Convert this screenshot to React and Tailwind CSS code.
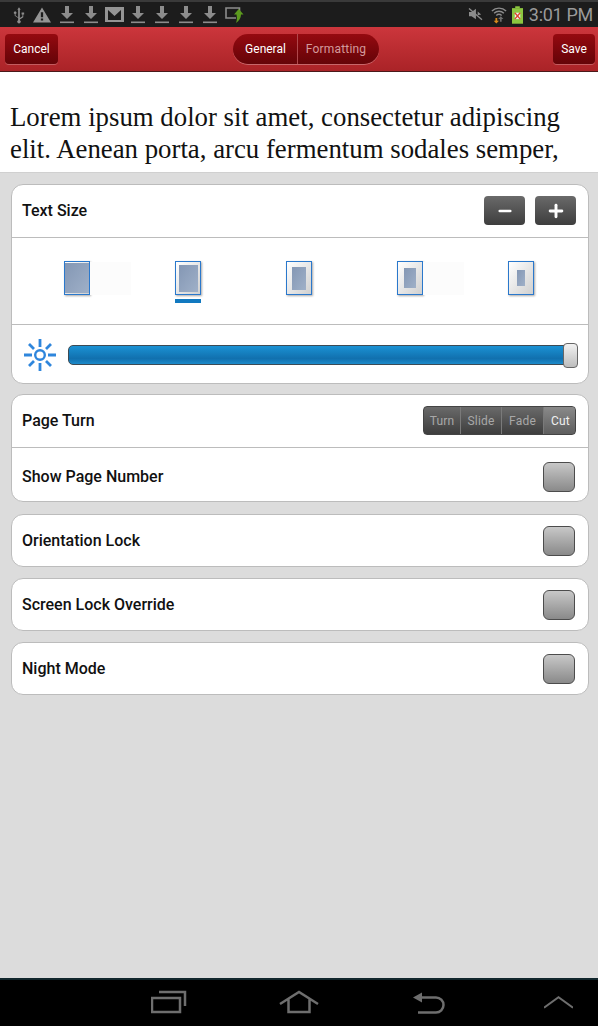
import { Plus, Minus } from "lucide-react";

const font = { fontFamily: "Roboto, sans-serif" };

function Down({ className = "" }) {
    return (
        <svg width="14" height="18" viewBox="0 0 14 18" className={`text-[#8c8c8c] ${className}`}>
            <path d="M5 0h4v7h4l-6 6-6-6h4z" fill="currentColor" />
            <rect x="0" y="15.500" width="14" height="1.600" fill="currentColor" />
        </svg>
    );
}

function StatusBar() {
    return (
        <div className="h-[27px] bg-[#1c1c1c] border-t-2 border-[#3a3a3a] flex items-center justify-between pl-[13px] pr-[5px]">
            <div className="flex items-center">
                <svg width="12" height="18" viewBox="0 0 14 18" className="text-[#8c8c8c]">
                    <path d="M7 0l2 3H8v9.500l3-2V8.500H10V6h3v2.500h-1v3l-4 2.700V15a2 2 0 1 1-2 0v-2.500L2 10V7.800a1.500 1.500 0 1 1 1 0v1.700l3 2V3H5z" fill="currentColor" />
                </svg>
                <svg width="18" height="16" viewBox="0 0 19 16" className="ml-[8px] text-[#949494]">
                    <path d="M9.500 0L19 16H0zM8.300 5v5.500h2.400V5zm0 6.700v2h2.400v-2z" fill="currentColor" fillRule="evenodd" />
                </svg>
                <Down className="ml-[9px]" />
                <Down className="ml-[10px]" />
                <svg width="19" height="15" viewBox="0 0 19 15" className="ml-[7px] text-[#949494]">
                    <path d="M0 0h19v15H0zM3 3v10h13V3L9.500 9z" fill="currentColor" fillRule="evenodd" />
                </svg>
                <Down className="ml-[7px]" />
                <Down className="ml-[10px]" />
                <Down className="ml-[10px]" />
                <Down className="ml-[10px]" />
                <svg width="19" height="17" viewBox="0 0 19 17" className="ml-[8px] mt-[2px]">
                    <path d="M14.500 5V1H1v10h10" fill="none" stroke="#8c8c8c" strokeWidth="1.600" />
                    <path d="M13.700 2l4.800 5.500H16C16 11 14 14 11 16c1.200-3 1-6 .5-8.500H9z" fill="#5c9a1e" />
                </svg>
            </div>
            <div className="flex items-center">
                <svg width="15" height="13" viewBox="0 0 17 15" className="text-[#8c8c8c]">
                    <path d="M1 4.500h3L9 1v12L4 9.500H1z" fill="currentColor" />
                    <path d="M1 0.500L16 13.500" stroke="currentColor" strokeWidth="1.500" />
                    <path d="M11 4l4 3.500-4 1z" fill="currentColor" />
                </svg>
                <svg width="16" height="18" viewBox="0 0 18 19" className="ml-[8px]">
                    <path d="M1 5a11.500 11.500 0 0 1 16 0M3.500 7.500a8 8 0 0 1 11 0M6 10a4.500 4.500 0 0 1 6 0" fill="none" stroke="#8c8c8c" strokeWidth="1.600" />
                    <path d="M5 13h2v3h2l-3 3-3-3h2z" fill="#d88a1c" />
                    <path d="M11 11l3 3h-2v3h-2v-3H8z" fill="#6e6e6e" />
                </svg>
                <svg width="11" height="18" viewBox="0 0 12 19" className="ml-[5px]">
                    <rect x="3.500" y="0" width="5" height="2" fill="#8cc63f" />
                    <rect x="0" y="2" width="12" height="17" fill="#8cc63f" />
                    <rect x="3" y="7" width="6" height="7" fill="#f2f2f2" />
                    <path d="M3 7l6 7M9 7l-6 7" stroke="#d9482b" strokeWidth="1.500" />
                </svg>
                <span className="ml-[6px] text-[18px] leading-none tracking-[-0.3px] text-[#9a9a9a]" style={font}>3:01 PM</span>
            </div>
        </div>
    );
}

function Header() {
    const btn = "h-[30px] rounded-[4px] bg-gradient-to-b from-[#950a10] to-[#650408] shadow-[0_1px_0_rgba(255,255,255,0.25)] text-white text-[12px] flex items-center justify-center";
    return (
        <div className="h-[45px] bg-gradient-to-b from-[#cc363c] to-[#aa2327] border-b border-[#4a1a1a] flex items-center justify-between pl-[5px] pr-[3px]" style={font}>
            <div className={`${btn} w-[53px]`}>Cancel</div>
            <div className="flex h-[30px] rounded-full overflow-hidden shadow-[0_1px_0_rgba(255,255,255,0.3)] text-[12px]">
                <div className="w-[65px] pl-[2px] flex items-center justify-center text-white bg-gradient-to-b from-[#950a10] to-[#650408] border-r border-[#b0484c]">General</div>
                <div className="w-[81px] pr-[4px] tracking-[0.2px] flex items-center justify-center text-[#d49a9c] bg-gradient-to-b from-[#950a10] to-[#650408]">Formatting</div>
            </div>
            <div className={`${btn} w-[42px]`}>Save</div>
        </div>
    );
}

function Card({ children, className = "" }) {
    return (
        <div className={`bg-white border border-[#bcbcbc] rounded-[12px] overflow-hidden ${className}`}>
            {children}
        </div>
    );
}

function Row({ label, children, className = "h-[53px]" }) {
    return (
        <div className={`flex items-center justify-between pl-[10px] pr-[13px] ${className}`}>
            <span className="text-[16px] font-medium text-[#111]" style={font}>{label}</span>
            {children}
        </div>
    );
}

function Check() {
    return <div className="w-[32px] h-[30px] rounded-[6px] border border-[#4c4c4c] bg-gradient-to-b from-[#c8c8c8] to-[#8a8a8a]" />;
}

function StepButton({ children }) {
    return (
        <div className="w-[41px] h-[29px] rounded-[4px] bg-gradient-to-b from-[#6a6a6a] to-[#3e3e3e] flex items-center justify-center text-white">
            {children}
        </div>
    );
}

function Thumb({ w, h, active, ghost }) {
    return (
        <div className="relative">
            <div className="flex items-center justify-center w-[26px] h-[34px] border border-[#2a78cc] bg-gradient-to-br from-[#ffffff] to-[#d0d0d0] shadow-[1px_1px_2px_rgba(0,0,0,0.35)]">
                <div className="bg-gradient-to-br from-[#8497b4] to-[#9fb0c8]" style={{ width: w, height: h }} />
            </div>
            {ghost && <div className="absolute left-[26px] top-[1px] h-[33px] bg-[#fcfcfc]" style={{ width: ghost }} />}
            {active && <div className="absolute left-0 top-[38px] w-[26px] h-[4px] bg-[#1279c0]" />}
        </div>
    );
}

function Sun() {
    return (
        <svg width="34" height="34" viewBox="0 0 34 34" fill="none" stroke="#2f86dc">
            <circle cx="17" cy="17" r="4.800" strokeWidth="2.400" />
            <path strokeWidth="2.800" d="M17 1v8M17 25v8M1 17h8M25 17h8M6 6l5 5M23 23l5 5M28 6l-5 5M11 23l-5 5" />
        </svg>
    );
}

function Segments() {
    const items = [
        { t: "Turn", c: "w-[37px] text-[#a8a8a8] border-r border-[#7a7a7a]" },
        { t: "Slide", c: "w-[41px] text-[#a8a8a8] border-r border-[#7a7a7a]" },
        { t: "Fade", c: "w-[42px] text-[#a8a8a8] border-r border-[#7a7a7a]" },
        { t: "Cut", c: "flex-1 pl-[2px] text-[#f0f0f0] bg-gradient-to-b from-[#8a8a8a] to-[#5e5e5e]" },
    ];
    return (
        <div className="flex w-[153px] -mr-[1px] -mt-[1px] h-[29px] rounded-[4px] overflow-hidden bg-gradient-to-b from-[#6a6a6a] to-[#3e3e3e] border border-[#444] text-[12px] tracking-[0.2px]" style={font}>
            {items.map((i) => (
                <div key={i.t} className={`flex items-center justify-center ${i.c}`}>
                    {i.t}
                </div>
            ))}
        </div>
    );
}

function NavBar() {
    return (
        <div className="h-[48px] bg-black border-t-2 border-[#11262c] flex items-center pb-[2px] pl-[151px]">
            <svg width="36" height="24" viewBox="0 0 36 24" fill="none" stroke="#6e6e6e" strokeWidth="2.500">
                <path d="M1 8h28v14H1zM8 2h26v14" />
            </svg>
            <svg width="40" height="24" viewBox="0 0 40 24" fill="none" stroke="#6e6e6e" strokeWidth="2.500" className="ml-[92px]">
                <path d="M1 14L20 2l19 12M9.500 9v13h21V9" />
            </svg>
            <svg width="32" height="24" viewBox="0 0 32 24" fill="none" className="ml-[94px]">
                <path d="M8 7.500H23a7.500 7.500 0 0 1 0 15H5" stroke="#6e6e6e" strokeWidth="2.500" />
                <path d="M0 7.500L9 2.500v10z" fill="#6e6e6e" />
            </svg>
            <svg width="29" height="14" viewBox="0 0 30 14" fill="none" stroke="#6e6e6e" strokeWidth="2" className="ml-[99px]">
                <path d="M0 13L15 2l15 11" />
            </svg>
        </div>
    );
}

export default function App() {
    return (
        <div className="w-[598px] h-[1026px] flex flex-col bg-[#dcdcdc] overflow-hidden">
            <StatusBar />
            <Header />
            <div className="h-[101px] bg-white pt-[29px] pl-[10px] border-b border-[#d0d0d0]">
                <p className="text-[26.8px] leading-[32px] text-[#111] whitespace-nowrap" style={{ fontFamily: '"Liberation Serif", serif' }}>
                    Lorem ipsum dolor sit amet, consectetur adipiscing
                    <br />
                    elit. Aenean porta, arcu fermentum sodales semper,
                </p>
            </div>
            <div className="flex-1 flex flex-col pl-[11px] pr-[9px] pt-[11px]">
                <Card>
                    <Row label="Text Size" className="h-[53px] border-b border-[#bcbcbc]">
                        <div className="flex gap-[10px] -mr-[1px] -mt-[1px]">
                            <StepButton><Minus size={18} strokeWidth={3.5} /></StepButton>
                            <StepButton><Plus size={20} strokeWidth={3.5} /></StepButton>
                        </div>
                    </Row>
                    <div className="h-[87px] border-b border-[#bcbcbc] flex pt-[23px] pl-[52px] gap-[85px]">
                        <Thumb w={24} h={30} ghost={41} />
                        <Thumb w={19} h={27} active />
                        <Thumb w={14} h={23} />
                        <Thumb w={12} h={20} ghost={41} />
                        <Thumb w={8} h={16} />
                    </div>
                    <div className="h-[58px] flex items-center pt-[2px] pl-[11px] pr-[10px]">
                        <Sun />
                        <div className="relative flex-1 ml-[11px] h-[20px] rounded-[5px] border border-[#3c4a54] bg-gradient-to-b from-[#1b92d4] via-[#1170ae] via-70% to-[#1c8bcb]">
                            <div className="absolute right-[-1px] top-[-3px] w-[15px] h-[25px] rounded-[4px] border border-[#666] bg-gradient-to-b from-[#f2f2f2] to-[#bdbdbd]" />
                        </div>
                    </div>
                </Card>
                <Card className="mt-[10px]">
                    <Row label="Page Turn" className="h-[53px] border-b border-[#bcbcbc]"><Segments /></Row>
                    <Row label="Show Page Number" className="h-[53px] pt-[4px]"><Check /></Row>
                </Card>
                <Card className="mt-[12px]">
                    <Row label="Orientation Lock" className="h-[51px]"><Check /></Row>
                </Card>
                <Card className="mt-[11px]">
                    <Row label="Screen Lock Override" className="h-[51px]"><Check /></Row>
                </Card>
                <Card className="mt-[11px]">
                    <Row label="Night Mode" className="h-[51px]"><Check /></Row>
                </Card>
            </div>
            <NavBar />
        </div>
    );
}
